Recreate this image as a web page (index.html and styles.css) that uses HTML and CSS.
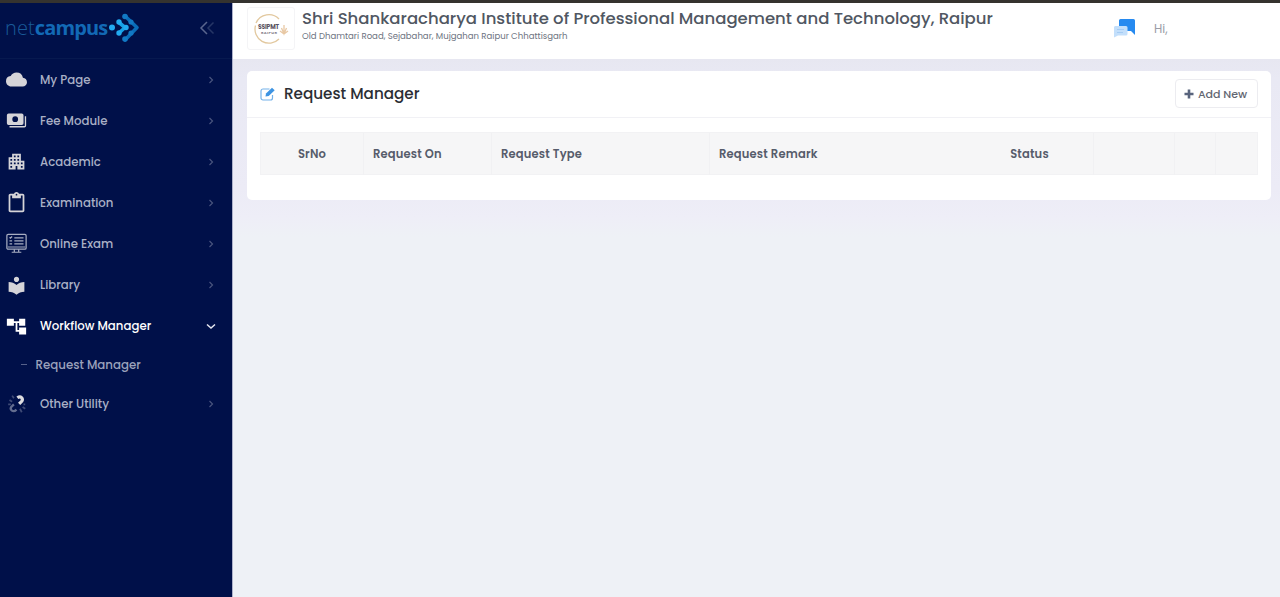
FILE: index.html
```html
<!DOCTYPE html>
<html lang="en">
<head>
<meta charset="utf-8">
<title>Request Manager</title>
<link rel="stylesheet" href="styles.css">
</head>
<body>
<div class="app">
  <aside class="sidebar">
    <div class="brand">
      <div class="logo">
        <span class="logo-net">net</span><span class="logo-campus">campus</span>
        <svg class="logo-mark" width="32" height="30" viewBox="0 0 32 30" fill="none" stroke-linecap="round" stroke-linejoin="round">
          <path d="M17 3L29 14.500L17 27" stroke="#0a6cb8" stroke-width="3.600"/>
          <g fill="#1279c4"><circle cx="17" cy="3.500" r="2.800"/><circle cx="23" cy="9" r="2.600"/><circle cx="23" cy="20" r="2.600"/><circle cx="17" cy="26" r="2.800"/></g>
          <path d="M11 9.500L17 14.500L11 20" stroke="#16a0e6" stroke-width="3.600"/>
          <g fill="#22aaf0"><circle cx="11" cy="9" r="2.700"/><circle cx="18" cy="14.500" r="2.700"/><circle cx="11" cy="20" r="2.700"/><circle cx="4" cy="14.500" r="3"/></g>
        </svg>
      </div>
      <svg class="collapse" width="16" height="16" viewBox="0 0 16 16" fill="none" stroke-width="1.500"><path d="M8 2L2 8L8 14" stroke="#59658d"/><path d="M14.500 2.500L9 8L14.500 13.500" stroke="#263666"/></svg>
    </div>
    <nav class="menu">
      <a class="item"><svg class="icon" viewBox="0 0 24 24"><path d="M19.350 10.040A7.490 7.490 0 0 0 12 4C9.110 4 6.600 5.640 5.350 8.040A5.994 5.994 0 0 0 0 14c0 3.310 2.690 6 6 6h13c2.760 0 5-2.240 5-5 0-2.640-2.050-4.780-4.650-4.960z"/></svg><span class="label">My Page</span><svg class="chev" viewBox="0 0 8 8"><path d="M2.500 1L5.500 4L2.500 7"/></svg></a>
      <a class="item"><svg class="icon" viewBox="0 0 24 24"><path fill-rule="evenodd" d="M3 4h15a2 2 0 0 1 2 2v9a2 2 0 0 1-2 2H3a2 2 0 0 1-2-2V6a2 2 0 0 1 2-2zm7.500 3.200a3.300 3.300 0 1 0 0 6.600 3.300 3.300 0 0 0 0-6.600zM21.500 7H23v11a2 2 0 0 1-2 2H4v-1.700h17.500z"/></svg><span class="label">Fee Module</span><svg class="chev" viewBox="0 0 8 8"><path d="M2.500 1L5.500 4L2.500 7"/></svg></a>
      <a class="item"><svg class="icon" viewBox="0 0 24 24"><path d="M17 11V3H7v4H3v14h8v-4h2v4h8V11h-4zM7 19H5v-2h2v2zm0-4H5v-2h2v2zm0-4H5V9h2v2zm4 4H9v-2h2v2zm0-4H9V9h2v2zm0-4H9V5h2v2zm4 8h-2v-2h2v2zm0-4h-2V9h2v2zm0-4h-2V5h2v2zm4 12h-2v-2h2v2zm0-4h-2v-2h2v2z"/></svg><span class="label">Academic</span><svg class="chev" viewBox="0 0 8 8"><path d="M2.500 1L5.500 4L2.500 7"/></svg></a>
      <a class="item"><svg class="icon" viewBox="0 0 24 24"><path d="M19 2h-4.200C14.400.8 13.300 0 12 0S9.600.8 9.200 2H5c-1.100 0-2 .9-2 2v17c0 1.100.9 2 2 2h14c1.100 0 2-.9 2-2V4c0-1.100-.9-2-2-2zm-7 0c.6 0 1 .4 1 1s-.4 1-1 1-1-.4-1-1 .4-1 1-1zm7 19H5V4h2v3h10V4h2z"/></svg><span class="label">Examination</span><svg class="chev" viewBox="0 0 8 8"><path d="M2.500 1L5.500 4L2.500 7"/></svg></a>
      <a class="item"><svg class="icon line" viewBox="0 0 24 24"><rect x="1" y="1.500" width="22" height="17" rx="1.500"/><path d="M2 16h20M9.500 5.500H20M9.500 9H20M9.500 12.500H20M4 5l1 1 2-2M4 9h3M4 12.500h3M9.500 18.500v3M14.500 18.500v3M6.500 22h11"/></svg><span class="label">Online Exam</span><svg class="chev" viewBox="0 0 8 8"><path d="M2.500 1L5.500 4L2.500 7"/></svg></a>
      <a class="item"><svg class="icon" viewBox="0 0 24 24"><path d="M12 11.550C9.640 9.350 6.480 8 3 8v11c3.480 0 6.640 1.350 9 3.550 2.360-2.190 5.520-3.550 9-3.550V8c-3.480 0-6.640 1.350-9 3.550zM12 8c1.660 0 3-1.340 3-3s-1.340-3-3-3-3 1.340-3 3 1.340 3 3 3z"/></svg><span class="label">Library</span><svg class="chev" viewBox="0 0 8 8"><path d="M2.500 1L5.500 4L2.500 7"/></svg></a>
      <a class="item active"><svg class="icon" viewBox="0 0 24 24"><path d="M22 11V3h-7v3H9V3H1v8h8V8h2v10h4v3h8v-8h-8v3h-2V8h2v3z"/></svg><span class="label">Workflow Manager</span><svg class="chev down" viewBox="0 0 10 10"><path d="M1 3.500L5 7L9 3.500"/></svg></a>
      <a class="subitem"><span class="dash"></span><span class="label">Request Manager</span></a>
      <a class="item"><svg class="icon spin" viewBox="0 0 24 24" fill="none"><path d="M13 5.500c4-3 7 1 5 4l-3 3" stroke="#dddde0" stroke-width="3.600"/><path d="M4 8l3 2M7 3l2 3M2.500 13h3M19 16l3 2M16 18l2 4M20 13h2" stroke="#3f4b76" stroke-width="2"/><path d="M12 19c-4 4-8 0-6-3l3-3" stroke="#626c8f" stroke-width="2.600"/></svg><span class="label">Other Utility</span><svg class="chev" viewBox="0 0 8 8"><path d="M2.500 1L5.500 4L2.500 7"/></svg></a>
    </nav>
  </aside>
  <div class="page">
    <header class="topbar">
      <div class="crest">
        <svg width="36" height="32" viewBox="0 0 36 32" fill="none">
          <path d="M26 6A14 14 0 0 0 3 10M2.500 12.500A14 14 0 0 0 26 26" stroke="#e2c89e" stroke-width="1.300"/>
          <path d="M31 12v9M28.500 15l2.500 6 2.500-6M27 18l4 3 4-3" stroke="#e8c8a4" stroke-width="1.300"/>
          <text class="crest-name" x="5" y="16" textLength="21">SSIPMT</text>
          <text class="crest-city" x="8" y="20.500" textLength="16">RAIPUR</text>
        </svg>
      </div>
      <div class="institute">
        <div class="institute-name">Shri Shankaracharya Institute of Professional Management and Technology, Raipur</div>
        <div class="institute-address">Old Dhamtari Road, Sejabahar, Mujgahan Raipur Chhattisgarh</div>
      </div>
      <div class="user">
        <svg width="22" height="20" viewBox="0 0 22 20"><path d="M6.500 0h13A1.500 1.500 0 0 1 21 1.500V16l-4-4H5V1.500A1.500 1.500 0 0 1 6.500 0z" fill="#268af0"/><path d="M2 7h10a1.500 1.500 0 0 1 1.500 1.500V15a1.500 1.500 0 0 1-1.500 1.500H4L0 18.500V8.500A1.500 1.500 0 0 1 2 7z" fill="#c3dffb"/><path d="M3 10.500h7M3 13.500h6" stroke="#a5ccf4"/></svg>
        <span class="greeting">Hi,</span>
      </div>
    </header>
    <main class="content">
      <section class="card">
        <div class="card-head">
          <svg width="16" height="14" viewBox="0 0 16 14" fill="none" stroke="#75b2e9"><path d="M12.500 8v3a2 2 0 0 1-2 2H3a2 2 0 0 1-2-2V4a2 2 0 0 1 2-2h6.500" stroke-width="1.200"/><path d="M5.500 9.500l.5-3L12 .7l2.700 2.500L8.700 9z" fill="#3e94e2" stroke="none"/></svg>
          <h1>Request Manager</h1>
          <button class="add"><svg width="10" height="10" viewBox="0 0 10 10"><path d="M5 .5v9M.5 5h9" stroke="#59647d" stroke-width="2.600"/></svg><span>Add New</span></button>
        </div>
        <div class="thead">
          <div class="c1">SrNo</div><div>Request On</div><div>Request Type</div><div>Request Remark</div><div class="c5">Status</div><div></div><div></div><div></div>
        </div>
      </section>
    </main>
  </div>
</div>
</body>
</html>
```
FILE: styles.css
```css
* { box-sizing: border-box; }
body { margin: 0; font-family: Poppins, Inter, "Liberation Sans", sans-serif; background: #eef1f6; }
.app { display: flex; width: 1280px; height: 597px; border-top: 3px solid #35332f; overflow: hidden; }
.sidebar { width: 233px; flex: none; background: #001049; border-right: 1px solid #aeb2cb; }
.brand { height: 56px; display: flex; align-items: center; justify-content: space-between; padding: 0 17px 6px 5px; border-bottom: 1px solid #07194f; }
.logo { display: flex; align-items: center; font-family: "Open Sans", sans-serif; font-size: 20px; line-height: 30px; color: #1269b5; }
.logo-net { font-weight: 300; color: #195a98; letter-spacing: .1px; }
.logo-campus { font-weight: 700; letter-spacing: -.85px; }
.logo-mark { margin-left: 1px; }
.item { height: 41.100px; display: flex; align-items: center; padding: 0 17px 0 6px; color: #aab0c6; }
.icon { width: 21px; height: 21px; flex: none; fill: #d5d4d8; }
.icon.line { fill: none; stroke: #a7adc1; stroke-width: 1.400; }
.icon.spin { fill: none; }
.label { margin-left: 13px; flex: 1; font-size: 11.750px; font-weight: 500; line-height: 18px; white-space: nowrap; }
.chev { width: 8px; height: 8px; fill: none; stroke: #48547e; stroke-width: 1.200; }
.active { color: #fff; }
.active .icon { fill: #fff; }
.chev.down { width: 10px; height: 10px; margin-right: -1px; stroke: #e5e7f0; stroke-width: 1.500; }
.subitem { height: 36.600px; display: flex; align-items: center; padding-left: 21px; color: #9ba2bc; }
.dash { width: 6px; height: 1px; background: #56618a; }
.subitem .label { margin-left: 8.500px; font-size: 11.800px; }
.page { flex: 1; min-width: 0; display: flex; flex-direction: column; }
.topbar { height: 55.500px; flex: none; display: flex; background: #fff; padding: 4px 0 0 14px; }
.crest { width: 48px; height: 43px; display: flex; align-items: center; justify-content: center; border: 1px solid #f4f4f6; border-radius: 3px; }
.crest-name { font-size: 6px; font-weight: 700; fill: #5a5260; }
.crest-city { font-size: 4px; font-weight: 700; fill: #8b8590; }
.institute { margin-left: 7px; width: 740px; white-space: nowrap; }
.institute-name { font-size: 16.500px; font-weight: 500; line-height: 23px; color: #505762; }
.institute-address { font-size: 8.550px; font-weight: 400; line-height: 12px; color: #6d737f; }
.user { display: flex; align-items: flex-start; padding: 12px 0 0 72px; }
.greeting { margin-left: 18px; font-size: 12px; line-height: 20px; color: #9b9da7; }
.content { flex: 1; padding: 12.500px 9px 0 14px; background: linear-gradient(#e7e7f1 0, #e9e9f4 20px, #ecebf6 130px, #eeeef7 158px, #eef1f6 178px); }
.card { height: 129px; background: #fff; border-radius: 5px; }
.card-head { height: 47px; display: flex; align-items: center; padding: 0 13px 1px; border-bottom: 1px solid #f1f1f5; }
h1 { margin: 0 auto 0 8px; font-size: 15.200px; line-height: 22px; font-weight: 500; color: #2b2e34; }
.add { width: 83px; height: 29px; display: flex; align-items: center; justify-content: center; gap: 4px; padding: 0 2px 0 0; background: #fff; border: 1px solid #ececf0; border-radius: 4px; font: 500 11px/18px Poppins, Inter, sans-serif; color: #626671; white-space: nowrap; }
.thead { height: 43px; margin: 13.500px 13px 0; display: grid; grid-template-columns: 103px 128px 218px 256px 128px 81px 41px 1fr; background: #f6f6f7; border: 1px solid #f2f2f4; font-size: 11.500px; font-weight: 600; letter-spacing: .18px; line-height: 42px; color: #565c6b; white-space: nowrap; }
.thead > div { padding-left: 9px; border-right: 1px solid #f1f1f3; }
.thead > div:last-child { border-right: 0; }
.thead .c1 { padding: 0; text-align: center; }
.thead > div:nth-child(4) { border-right: 0; }
.thead .c5 { padding: 0; text-align: center; }
```
